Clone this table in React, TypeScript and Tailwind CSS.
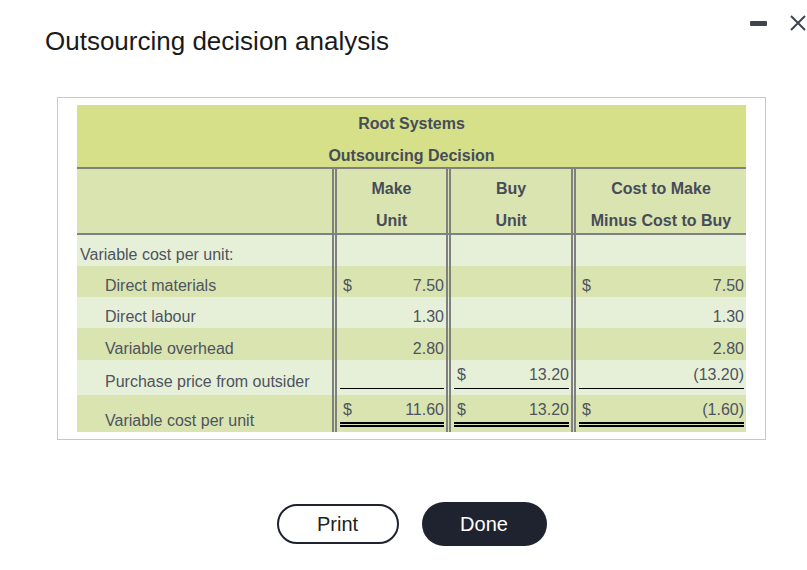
import React from 'react'

type Line = 'none' | 'single' | 'double'

type Row = {
  label: string
  indent?: boolean
  dark?: boolean
  h: string
  line: Line
  make?: [boolean, string]
  buy?: [boolean, string]
  diff?: [boolean, string]
}

const rows: Row[] = [
  { label: 'Variable cost per unit:', h: 'h-[31px]', line: 'none' },
  { label: 'Direct materials', indent: true, dark: true, h: 'h-[31px]', line: 'none', make: [true, '7.50'], diff: [true, '7.50'] },
  { label: 'Direct labour', indent: true, h: 'h-[31px]', line: 'none', make: [false, '1.30'], diff: [false, '1.30'] },
  { label: 'Variable overhead', indent: true, dark: true, h: 'h-[32px]', line: 'none', make: [false, '2.80'], diff: [false, '2.80'] },
  { label: 'Purchase price from outsider', indent: true, h: 'h-[35px]', line: 'single', make: [false, ''], buy: [true, '13.20'], diff: [false, '(13.20)'] },
  { label: 'Variable cost per unit', indent: true, dark: true, h: 'h-[37px]', line: 'double', make: [true, '11.60'], buy: [true, '13.20'], diff: [true, '(1.60)'] },
]

function NumCell({ cell, line }: { cell?: [boolean, string]; line: Line }) {
  const pad = line === 'single' ? 'pb-[6px]' : line === 'double' ? 'pb-[5px]' : 'pb-[1px]'
  const inner =
    !cell || line === 'none'
      ? ''
      : line === 'single'
        ? 'pb-[3px] border-b border-black'
        : 'pb-[2px] border-b-[5px] border-double border-black'
  return (
    <div className={`border-l-[5px] border-double border-[#808080] flex flex-col justify-end pl-[3px] pr-[2px] ${pad}`}>
      <div className={`flex justify-between leading-[20px] ${inner}`}>
        <span className="pl-[3px]">{cell && cell[0] ? '$' : ''}</span>
        <span>{cell ? cell[1] : ''}</span>
      </div>
    </div>
  )
}

export default function App() {
  return (
    <div className="relative w-[807px] h-[570px] bg-white font-['Liberation_Sans',Arial,sans-serif] overflow-hidden">
      <div className="absolute top-[15px] right-[1px] flex items-center gap-[23px]">
        <div className="w-[17px] h-[5px] bg-[#3f4450] rounded-[1px]" />
        <svg width="16" height="16" viewBox="0 0 16 16" className="text-[#3f4450]">
          <path d="M1 1 L15 15 M15 1 L1 15" stroke="currentColor" strokeWidth="2" fill="none" />
        </svg>
      </div>

      <h1 className="pl-[45px] pt-[26px] text-[26px] leading-[30px] text-[#1a1a1a]">
        Outsourcing decision analysis
      </h1>

      <div className="ml-[57px] mt-[41px] w-[709px] border border-[#c8c8c8] px-[19px] py-[7px]">
        <div className="text-[16px] text-[#4e5360]">
          <div className="h-[64px] bg-[#d5e089] border-b-2 border-[#808080] pt-[3px] text-center font-bold leading-[32px] text-[#474c59]">
            <div>Root Systems</div>
            <div>Outsourcing Decision</div>
          </div>
          <div className="grid grid-cols-[255px_114px_125px_175px] h-[66px] bg-[#d9e4b0] border-b-2 border-[#808080] font-bold text-center leading-[32px] text-[#474c59]">
            <div />
            <div className="border-l-[5px] border-double border-[#808080] pt-[4px]">
              <div>Make</div>
              <div>Unit</div>
            </div>
            <div className="border-l-[5px] border-double border-[#808080] pt-[4px]">
              <div>Buy</div>
              <div>Unit</div>
            </div>
            <div className="border-l-[5px] border-double border-[#808080] pt-[4px]">
              <div>Cost to Make</div>
              <div>Minus Cost to Buy</div>
            </div>
          </div>
          {rows.map((r) => (
            <div
              key={r.label + r.h}
              className={`grid grid-cols-[255px_114px_125px_175px] ${r.h} ${r.dark ? 'bg-[#d9e4b0]' : 'bg-[#e6f0d8]'}`}
            >
              <div
                className={`flex items-end leading-[20px] ${r.indent ? 'pl-[28px]' : 'pl-[3px]'} ${r.line === 'single' ? 'pb-[3px]' : r.line === 'double' ? 'pb-[1px]' : 'pb-[1px]'}`}
              >
                {r.label}
              </div>
              <NumCell cell={r.make} line={r.line} />
              <NumCell cell={r.buy} line={r.line} />
              <NumCell cell={r.diff} line={r.line} />
            </div>
          ))}
        </div>
      </div>

      <div className="ml-[57px] mt-[62px] w-[709px] flex justify-center items-center gap-[23px]">
        <button className="w-[122px] h-[40px] rounded-full border-2 border-[#1f2330] text-[20px] text-[#222]">
          Print
        </button>
        <button className="w-[125px] h-[44px] rounded-full bg-[#1f2330] text-[20px] text-white">
          Done
        </button>
      </div>
    </div>
  )
}
